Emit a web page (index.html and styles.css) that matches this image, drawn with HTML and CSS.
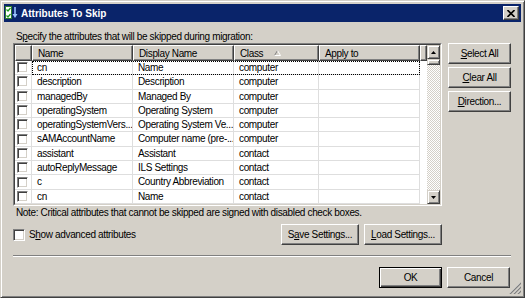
FILE: index.html
```html
<!DOCTYPE html>
<html lang="en">
<head>
    <meta charset="UTF-8">
    <title>Attributes To Skip</title>
    <link rel="stylesheet" href="styles.css">
</head>
<body>
    <div class="window">
        <div class="titlebar">
            <svg class="app-icon" width="14" height="14" viewBox="0 0 14 14">
                <rect x="0.5" y="0.5" width="6" height="12" fill="#fff" stroke="#2f7d2f"/>
                <path d="M1.5 3.5 L3 5 L5.5 2" fill="none" stroke="#1a9a1a" stroke-width="1.2"/>
                <path d="M1.5 9.5 L3 11 L5.5 8" fill="none" stroke="#1a9a1a" stroke-width="1.2"/>
                <path d="M10 1 V9" stroke="#9cc4ff" stroke-width="1.6"/>
                <path d="M7.5 8 L10 12 L12.5 8 Z" fill="#9cc4ff"/>
            </svg>
            <span class="title">Attributes To Skip</span>
            <div class="close-btn">
                <svg width="8" height="7" viewBox="0 0 8 7">
                    <path d="M0.5 0 L7.5 7 M7.5 0 L0.5 7" stroke="#000" stroke-width="1.6"/>
                </svg>
            </div>
        </div>

        <div class="client">
            <div class="intro">S<u>p</u>ecify the attributes that will be skipped during migration:</div>

            <div class="main">
                <div class="listview">
                    <div class="list-frame">
                        <div class="list-body">
                            <div class="header">
                                <div class="hcell col-check"></div>
                                <div class="hcell col-name">Name</div>
                                <div class="hcell col-dn">Display Name</div>
                                <div class="hcell col-class">Class
                                    <svg class="sort-arrow" width="7" height="6" viewBox="0 0 7 6">
                                        <path d="M0.5 5.5 L3.5 0.5" stroke="#808080" fill="none"/>
                                        <path d="M3.5 0.5 L6.5 5.5 H0.5" stroke="#fff" fill="none"/>
                                    </svg>
                                </div>
                                <div class="hcell col-apply">Apply to</div>
                                <div class="hcell col-rest"></div>
                            </div>
                            <div class="rows">
                                <div class="row">
                                    <div class="cell col-check"><span class="checkbox"></span></div>
                                    <div class="cells focused">
                                        <div class="cell col-name">cn</div>
                                        <div class="cell col-dn">Name</div>
                                        <div class="cell col-class">computer</div>
                                        <div class="cell col-apply"></div>
                                    </div>
                                </div>
                                <div class="row">
                                    <div class="cell col-check"><span class="checkbox"></span></div>
                                    <div class="cells">
                                        <div class="cell col-name">description</div>
                                        <div class="cell col-dn">Description</div>
                                        <div class="cell col-class">computer</div>
                                        <div class="cell col-apply"></div>
                                    </div>
                                </div>
                                <div class="row">
                                    <div class="cell col-check"><span class="checkbox"></span></div>
                                    <div class="cells">
                                        <div class="cell col-name">managedBy</div>
                                        <div class="cell col-dn">Managed By</div>
                                        <div class="cell col-class">computer</div>
                                        <div class="cell col-apply"></div>
                                    </div>
                                </div>
                                <div class="row">
                                    <div class="cell col-check"><span class="checkbox"></span></div>
                                    <div class="cells">
                                        <div class="cell col-name">operatingSystem</div>
                                        <div class="cell col-dn">Operating System</div>
                                        <div class="cell col-class">computer</div>
                                        <div class="cell col-apply"></div>
                                    </div>
                                </div>
                                <div class="row">
                                    <div class="cell col-check"><span class="checkbox"></span></div>
                                    <div class="cells">
                                        <div class="cell col-name">operatingSystemVers...</div>
                                        <div class="cell col-dn">Operating System Ve...</div>
                                        <div class="cell col-class">computer</div>
                                        <div class="cell col-apply"></div>
                                    </div>
                                </div>
                                <div class="row">
                                    <div class="cell col-check"><span class="checkbox"></span></div>
                                    <div class="cells">
                                        <div class="cell col-name">sAMAccountName</div>
                                        <div class="cell col-dn">Computer name (pre-...</div>
                                        <div class="cell col-class">computer</div>
                                        <div class="cell col-apply"></div>
                                    </div>
                                </div>
                                <div class="row">
                                    <div class="cell col-check"><span class="checkbox"></span></div>
                                    <div class="cells">
                                        <div class="cell col-name">assistant</div>
                                        <div class="cell col-dn">Assistant</div>
                                        <div class="cell col-class">contact</div>
                                        <div class="cell col-apply"></div>
                                    </div>
                                </div>
                                <div class="row">
                                    <div class="cell col-check"><span class="checkbox"></span></div>
                                    <div class="cells">
                                        <div class="cell col-name">autoReplyMessage</div>
                                        <div class="cell col-dn">ILS Settings</div>
                                        <div class="cell col-class">contact</div>
                                        <div class="cell col-apply"></div>
                                    </div>
                                </div>
                                <div class="row">
                                    <div class="cell col-check"><span class="checkbox"></span></div>
                                    <div class="cells">
                                        <div class="cell col-name">c</div>
                                        <div class="cell col-dn">Country Abbreviation</div>
                                        <div class="cell col-class">contact</div>
                                        <div class="cell col-apply"></div>
                                    </div>
                                </div>
                                <div class="row">
                                    <div class="cell col-check"><span class="checkbox"></span></div>
                                    <div class="cells">
                                        <div class="cell col-name">cn</div>
                                        <div class="cell col-dn">Name</div>
                                        <div class="cell col-class">contact</div>
                                        <div class="cell col-apply"></div>
                                    </div>
                                </div>
                            </div>
                        </div>
                        <div class="scrollbar">
                            <div class="sb-btn">
                                <svg width="5" height="3" viewBox="0 0 5 3"><path d="M2.5 0 L5 3 H0 Z" fill="#000"/></svg>
                            </div>
                            <div class="sb-thumb"></div>
                            <div class="sb-track"></div>
                            <div class="sb-btn">
                                <svg width="5" height="3" viewBox="0 0 5 3"><path d="M0 0 H5 L2.5 3 Z" fill="#000"/></svg>
                            </div>
                        </div>
                    </div>
                </div>

                <div class="side-buttons">
                    <div class="btn"><u>S</u>elect All</div>
                    <div class="btn"><u>C</u>lear All</div>
                    <div class="btn"><u>D</u>irection...</div>
                </div>
            </div>

            <div class="note">Note: Critical attributes that cannot be skipped are signed with disabled check boxes.</div>

            <div class="options">
                <label class="option">
                    <span class="checkbox big"></span>
                    <span>S<u>h</u>ow advanced attributes</span>
                </label>
                <div class="settings-buttons">
                    <div class="btn wide">S<u>a</u>ve Settings...</div>
                    <div class="btn wide"><u>L</u>oad Settings...</div>
                </div>
            </div>

            <div class="separator"></div>

            <div class="dialog-buttons">
                <div class="btn default">OK</div>
                <div class="btn">Cancel</div>
            </div>
        </div>

        <svg class="grip" width="12" height="12" viewBox="0 0 12 12">
            <path d="M11 1 L1 11 M11 5 L5 11 M11 9 L9 11" stroke="#fff"/>
            <path d="M12 1 L1 12 M12 5 L5 12 M12 9 L9 12" stroke="#808080" stroke-width="1.4"/>
        </svg>
    </div>
</body>
</html>
```

FILE: styles.css
```css
body {
    margin: 0;
    padding: 0;
    background-color: #d4d0c8;
    font-family: "Liberation Sans", Arial, sans-serif;
    font-size: 10px;
    letter-spacing: -0.35px;
    color: #000;
}

.window {
    position: relative;
    width: 525px;
    height: 298px;
    box-sizing: border-box;
    padding: 3px;
    border: 1px solid;
    border-color: #d4d0c8 #404040 #404040 #d4d0c8;
    box-shadow: inset 1px 1px #fff, inset -1px -1px #808080;
    background-color: #d4d0c8;
}

/* title bar */
.titlebar {
    display: flex;
    align-items: center;
    height: 18px;
    padding: 0 2px 0 1px;
    background-color: #0a246a;
}

.app-icon {
    flex: none;
}

.title {
    margin-left: 2px;
    color: #fff;
    font-weight: bold;
    font-size: 10px;
    letter-spacing: 0;
}

.close-btn {
    margin-left: auto;
    width: 16px;
    height: 14px;
    box-sizing: border-box;
    display: flex;
    align-items: center;
    justify-content: center;
    background-color: #d4d0c8;
    border: 1px solid;
    border-color: #fff #404040 #404040 #fff;
    box-shadow: inset -1px -1px #808080;
}

/* client area */
.client {
    padding: 8px 10px 0 9px;
}

.intro {
    height: 13px;
    line-height: 13px;
    padding-left: 3px;
}

.main {
    display: flex;
    gap: 6px;
    height: 163px;
}

.listview {
    width: 429px;
    box-sizing: border-box;
    border: 1px solid;
    border-color: #808080 #fff #fff #808080;
}

.list-frame {
    display: flex;
    height: 100%;
    box-sizing: border-box;
    border: 1px solid;
    border-color: #404040 #d4d0c8 #d4d0c8 #404040;
    background-color: #fff;
}

.list-body {
    flex: 1;
    overflow: hidden;
}

.header {
    display: flex;
    height: 16px;
}

.hcell {
    flex: none;
    display: flex;
    align-items: center;
    height: 16px;
    box-sizing: border-box;
    padding-left: 5px;
    background-color: #d4d0c8;
    border: 1px solid;
    border-color: #fff #404040 #404040 #fff;
    box-shadow: inset -1px -1px #808080;
    white-space: nowrap;
}

.col-check { width: 17px; }
.col-name { width: 101px; }
.col-dn { width: 101px; }
.col-class { width: 85px; }
.col-apply { width: 101px; }
.col-rest { flex: 1; padding: 0; }

.sort-arrow {
    margin-left: 11px;
}

.row {
    display: flex;
    height: 14.3px;
}

.cells {
    display: flex;
}

.cells.focused {
    outline: 1px dotted #000;
    outline-offset: -1px;
}

.cell {
    flex: none;
    box-sizing: border-box;
    height: 14.3px;
    line-height: 13px;
    padding-left: 5px;
    border-right: 1px solid #dedede;
    border-bottom: 1px solid #dedede;
    white-space: nowrap;
    overflow: hidden;
}

.cell.col-check {
    padding-left: 2px;
    display: flex;
    align-items: center;
}

.checkbox {
    display: inline-block;
    width: 11px;
    height: 11px;
    box-sizing: border-box;
    background-color: #fff;
    border: 1px solid;
    border-color: #808080 #fff #fff #808080;
    box-shadow: inset 1px 1px #404040, inset -1px -1px #d4d0c8;
}

.checkbox.big {
    width: 12px;
    height: 12px;
}

/* scrollbar */
.scrollbar {
    width: 13px;
    display: flex;
    flex-direction: column;
    background-image: repeating-conic-gradient(#fff 0 25%, #d4d0c8 0 50%);
    background-size: 2px 2px;
}

.sb-btn,
.sb-thumb {
    box-sizing: border-box;
    background-color: #d4d0c8;
    border: 1px solid;
    border-color: #d4d0c8 #404040 #404040 #d4d0c8;
    box-shadow: inset 1px 1px #fff, inset -1px -1px #808080;
}

.sb-btn {
    height: 14px;
    display: flex;
    align-items: center;
    justify-content: center;
}

.sb-thumb {
    height: 6px;
}

.sb-track {
    flex: 1;
}

/* buttons */
.btn {
    display: flex;
    align-items: center;
    justify-content: center;
    width: 63px;
    height: 21px;
    box-sizing: border-box;
    background-color: #d4d0c8;
    border: 1px solid;
    border-color: #fff #404040 #404040 #fff;
    box-shadow: inset -1px -1px #808080;
    white-space: nowrap;
}

.btn.wide {
    width: 78px;
}

.btn.default {
    border-color: #000;
    box-shadow: inset 1px 1px #fff, inset -1px -1px #404040, inset -2px -2px #808080;
}

.side-buttons {
    display: flex;
    flex-direction: column;
    gap: 3px;
}

.note {
    margin-top: 1px;
    height: 12px;
    line-height: 12px;
    padding-left: 3px;
}

.options {
    width: 429px;
    margin-top: 5px;
    display: flex;
    align-items: center;
    justify-content: space-between;
}

.option {
    display: flex;
    align-items: center;
    gap: 4px;
}

.settings-buttons {
    display: flex;
    gap: 5px;
}

.separator {
    margin-top: 10px;
    border-top: 1px solid #808080;
    border-bottom: 1px solid #fff;
}

.dialog-buttons {
    margin-top: 10px;
    margin-right: 1px;
    display: flex;
    justify-content: flex-end;
    gap: 5px;
}

/* size grip in the corner */
.grip {
    position: absolute;
    right: 3px;
    bottom: 3px;
}
```
